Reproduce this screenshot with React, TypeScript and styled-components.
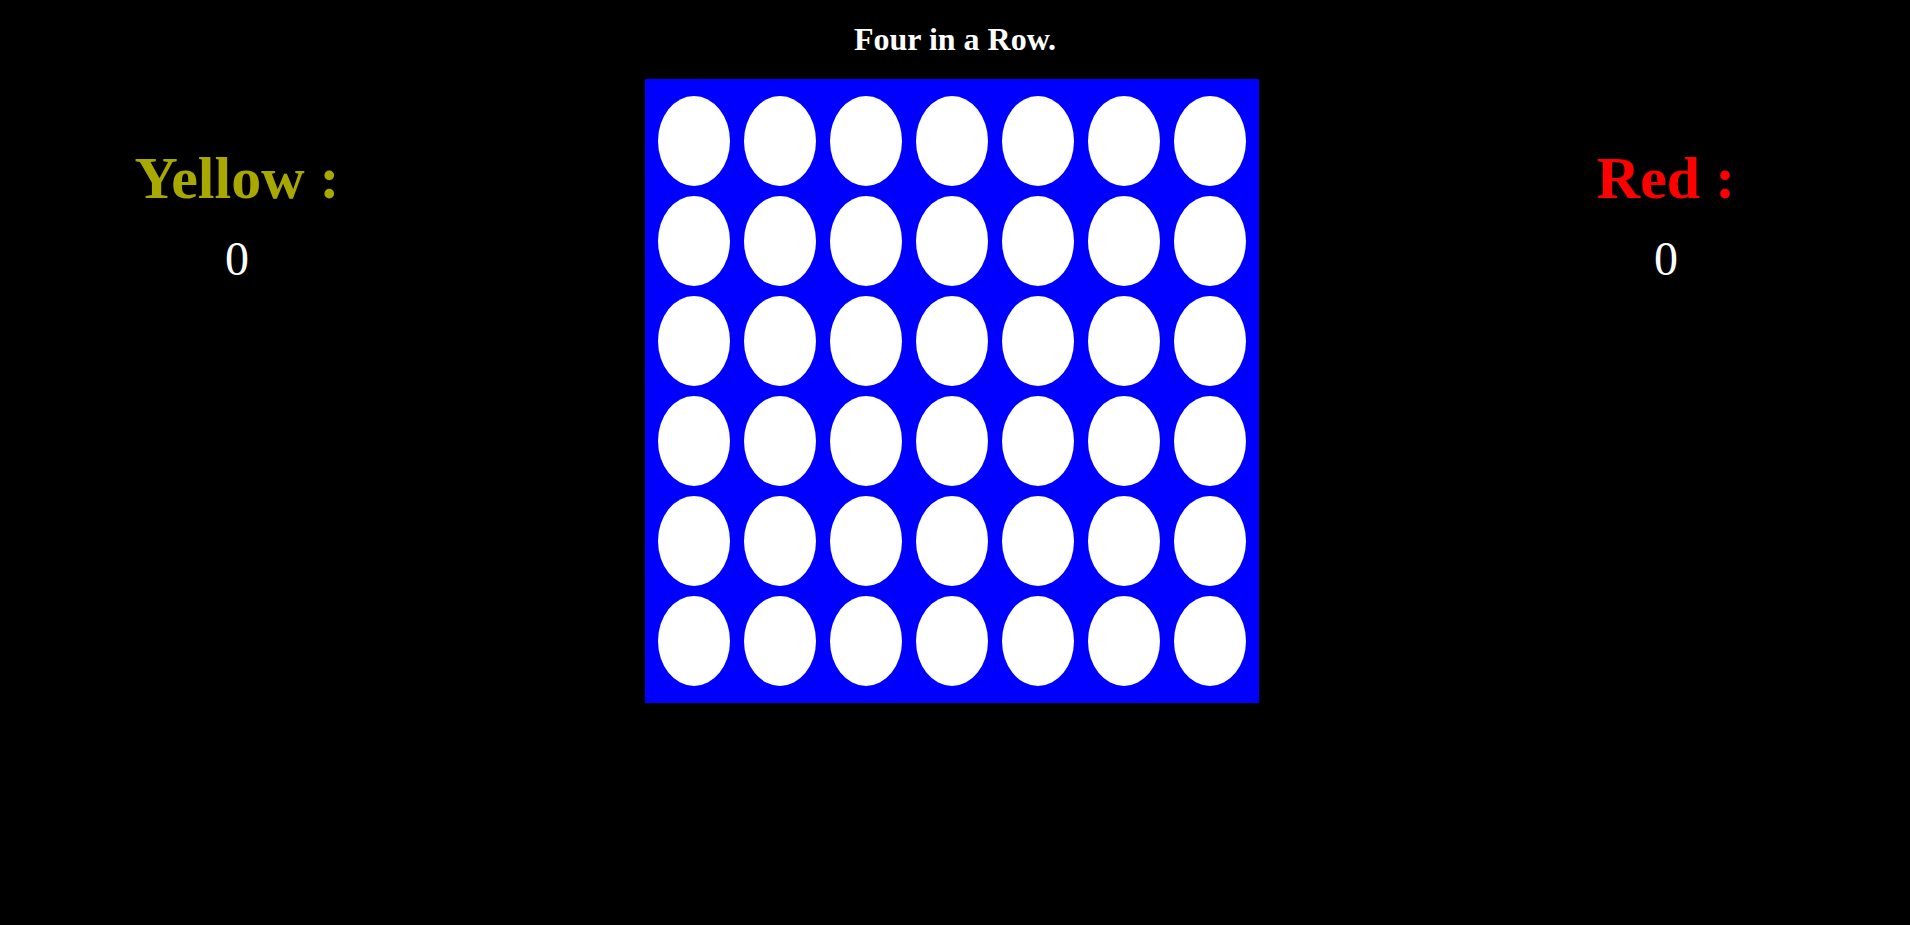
import { FC } from 'react'
import styled, { createGlobalStyle } from 'styled-components'


const GlobalStyle = createGlobalStyle`
  body {
    margin: 0;
    padding: 0 8px;
    background: #000;
    font-family: "Liberation Serif", "Times New Roman", serif;
  }
`

const Title = styled.h1`
  margin: 0;
  padding: 21px 0 22px;
  font-size: 32px;
  font-weight: bold;
  color: #fff;
  text-align: center;
  line-height: 36px;
`

const Layout = styled.div`
  display: grid;
  grid-template-columns: 458px 614px 1fr;
  column-gap: 179px;
  align-items: start;
`

const Side = styled.div<{ right?: boolean }>`
  display: flex;
  flex-direction: column;
  align-items: center;
  padding-top: 67px;
  padding-right: ${(p) => (p.right ? '8px' : '0')};
`

const PlayerName = styled.div<{ color: string }>`
  font-size: 60px;
  font-weight: bold;
  line-height: 64px;
  color: ${(p) => p.color};
`

const Score = styled.div`
  margin-top: 22px;
  font-size: 48px;
  line-height: 53px;
  color: #fff;
`

const Board = styled.div`
  background: #0000ff;
  padding: 12px 6px;
  display: grid;
  grid-template-columns: repeat(7, 86px);
  grid-auto-rows: 100px;
`

const Hole = styled.div`
  width: 72px;
  height: 90px;
  margin: 5px 7px;
  border-radius: 50%;
  background: #fff;
`


const App: FC = () => {

  const holes = Array.from({ length: 42 }, (_, i) => i)

  return (
    <>
      <GlobalStyle />

      <Title>Four in a Row.</Title>

      <Layout>

        <Side>
          <PlayerName color='#a8a800'>Yellow :</PlayerName>
          <Score>0</Score>
        </Side>

        <Board>
          {holes.map((i) => <Hole key={i} />)}
        </Board>

        <Side right>
          <PlayerName color='#ff0000'>Red :</PlayerName>
          <Score>0</Score>
        </Side>

      </Layout>
    </>
  )
}

export default App
